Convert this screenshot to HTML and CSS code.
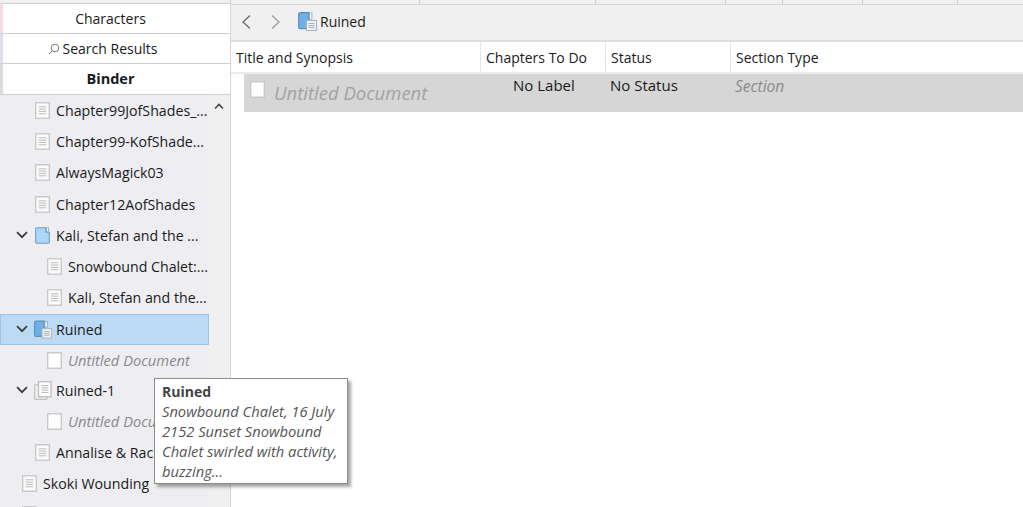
FILE: index.html
```html
<!DOCTYPE html>
<html lang="en">
<head>
<meta charset="utf-8">
<title>Binder</title>
<link rel="stylesheet" href="styles.css">
</head>
<body>
<svg class="defs" width="0" height="0" aria-hidden="true">
  <defs>
    <symbol id="doc" viewBox="0 0 16 18">
      <rect x="0.75" y="0.75" width="14.5" height="16.5" fill="#fbfbfb" stroke="#c9c9c9" stroke-width="1.5"/>
      <path d="M4 5h8M4 7.5h8M4 10h8M4 12.5h8" stroke="#b8b8b8" stroke-width="1"/>
    </symbol>
    <symbol id="blank" viewBox="0 0 16 18">
      <rect x="0.75" y="0.75" width="14.5" height="16.5" fill="#fff" stroke="#c8c8c8" stroke-width="1.5"/>
    </symbol>
    <symbol id="folder" viewBox="0 0 16 18">
      <path d="M2.2.7h9.3v4.8h3.8v10.3a1.5 1.5 0 0 1-1.5 1.5H2.2A1.5 1.5 0 0 1 .7 15.8V2.2A1.5 1.5 0 0 1 2.2.7z" fill="#aed6f7" stroke="#6f9fc6" stroke-width="1.2"/>
      <rect x="12.2" y="0.8" width="2.2" height="4" fill="#fff" stroke="#7f9db5" stroke-width=".8"/>
    </symbol>
    <symbol id="folderdoc" viewBox="0 0 19 19">
      <path d="M2.2.7h8.6v16H2.2A1.5 1.5 0 0 1 .7 15.2V2.2A1.5 1.5 0 0 1 2.2.7z" fill="#70b0e6" stroke="#5a8fbe" stroke-width="1.2"/>
      <rect x="11.5" y="1" width="2.4" height="6" fill="#fff" stroke="#7f9db5" stroke-width=".8"/>
      <rect x="8.5" y="8.5" width="10" height="10" fill="#eef2f5" stroke="#a9b4bd"/>
      <path d="M10.5 11.5h6M10.5 13.5h6M10.5 15.5h6" stroke="#a8b0b8"/>
    </symbol>
    <symbol id="stack" viewBox="0 0 18 19">
      <rect x="0.75" y="3.75" width="12" height="14.5" fill="#f2f2f2" stroke="#c0c0c0" stroke-width="1.2"/>
      <rect x="4.5" y="0.75" width="12.5" height="15" fill="#fff" stroke="#bcbcbc" stroke-width="1.3"/>
      <path d="M7.5 4.5h7M7.5 6.8h7M7.5 9.1h7M7.5 11.4h7" stroke="#b4b4b4"/>
    </symbol>
    <symbol id="chev" viewBox="0 0 12 8">
      <path d="M1 1.2l5 5 5-5" fill="none" stroke="#3c3c3c" stroke-width="1.7"/>
    </symbol>
  </defs>
</svg>
<div class="app">
  <aside class="sidebar">
    <div class="tabs">
      <div class="tab tab-pink">Characters</div>
      <div class="tab tab-blue"><svg class="search" viewBox="0 0 12 12" aria-hidden="true"><circle cx="7" cy="5" r="3.8" fill="none" stroke="#777" stroke-width="1"/><path d="M4.2 7.8L1 11" stroke="#777" stroke-width="1"/></svg>Search Results</div>
      <div class="tab tab-bold">Binder</div>
    </div>
    <div class="tree-wrap">
      <div class="tree">
        <div class="row lvl1"><svg class="ico"><use href="#doc"/></svg><span class="label">Chapter99JofShades_...</span></div>
        <div class="row lvl1"><svg class="ico"><use href="#doc"/></svg><span class="label">Chapter99-KofShade...</span></div>
        <div class="row lvl1"><svg class="ico"><use href="#doc"/></svg><span class="label">AlwaysMagick03</span></div>
        <div class="row lvl1 nudge"><svg class="ico"><use href="#doc"/></svg><span class="label">Chapter12AofShades</span></div>
        <div class="row lvl1"><svg class="chev"><use href="#chev"/></svg><svg class="ico"><use href="#folder"/></svg><span class="label">Kali, Stefan and the ...</span></div>
        <div class="row lvl2"><svg class="ico"><use href="#doc"/></svg><span class="label">Snowbound Chalet:...</span></div>
        <div class="row lvl2"><svg class="ico"><use href="#doc"/></svg><span class="label">Kali, Stefan and the...</span></div>
        <div class="row lvl1 selected nudge"><svg class="chev"><use href="#chev"/></svg><svg class="ico ico-wide"><use href="#folderdoc"/></svg><span class="label">Ruined</span></div>
        <div class="row lvl2"><svg class="ico"><use href="#blank"/></svg><span class="label muted">Untitled Document</span></div>
        <div class="row lvl1 pull"><svg class="chev"><use href="#chev"/></svg><svg class="ico ico-wide"><use href="#stack"/></svg><span class="label">Ruined-1</span></div>
        <div class="row lvl2"><svg class="ico"><use href="#blank"/></svg><span class="label muted">Untitled Document</span></div>
        <div class="row lvl1"><svg class="ico"><use href="#doc"/></svg><span class="label">Annalise &amp; Rachel</span></div>
        <div class="row lvl0"><svg class="ico"><use href="#doc"/></svg><span class="label">Skoki Wounding</span></div>
        <div class="row lvl0"><svg class="ico"><use href="#doc"/></svg></div>
      </div>
      <div class="scrollbar"><svg class="up" viewBox="0 0 10 7" aria-hidden="true"><path d="M1 5.5l4-4 4 4" fill="none" stroke="#444" stroke-width="1.6"/></svg></div>
    </div>
  </aside>
  <main class="content">
    <div class="ruler">
      <span class="tick t1"></span><span class="tick t2"></span><span class="tick t3"></span><span class="tick t4"></span><span class="tick t5"></span><span class="tick t6"></span>
    </div>
    <div class="header-bar">
      <svg class="nav" viewBox="0 0 12 16" aria-hidden="true"><path d="M10 1.5L3 8l7 6.5" fill="none" stroke="#707070" stroke-width="1.4"/></svg>
      <svg class="nav nav-next" viewBox="0 0 12 16" aria-hidden="true"><path d="M2 1.5L9 8l-7 6.5" fill="none" stroke="#a0a0a0" stroke-width="1.4"/></svg>
      <svg class="crumb-ico"><use href="#folderdoc"/></svg>
      <span>Ruined</span>
    </div>
    <div class="cols">
      <div class="col c-title">Title and Synopsis</div>
      <div class="col c-todo">Chapters To Do</div>
      <div class="col c-status">Status</div>
      <div class="col c-type">Section Type</div>
    </div>
    <div class="doc-row">
      <div class="cell c-title2"><svg class="doc-ico"><use href="#blank"/></svg><span class="doc-title">Untitled Document</span></div>
      <div class="cell c-label">No Label</div>
      <div class="cell c-stat">No Status</div>
      <div class="cell c-sec">Section</div>
    </div>
  </main>
</div>
<div class="tooltip">
  <strong>Ruined</strong>
  <em>Snowbound Chalet, 16 July 2152 Sunset Snowbound Chalet swirled with activity, buzzing...</em>
</div>
</body>
</html>
```
FILE: styles.css
```css
* { box-sizing: border-box; }
html, body { margin: 0; height: 100%; overflow: hidden; }
body {
  font-family: "Open Sans", "Noto Sans", sans-serif;
  font-size: 14px;
  color: #1a1a1a;
  background: #fff;
  position: relative;
}
.defs { position: absolute; }
.app { display: flex; height: 507px; }

.sidebar {
  width: 231px;
  flex: none;
  display: flex;
  flex-direction: column;
  border-right: 1px solid #d4d4d4;
  background: #f0f0f0;
}
.tabs { display: flex; flex-direction: column; padding-top: 3px; background: #f0f0f0; }
.tab {
  height: 30px;
  border-top: 1px solid #cfcfcf;
  border-left: 3px solid #e4e4e4;
  background: #fff;
  display: flex;
  align-items: center;
  justify-content: center;
  padding: 0 12px 1px 0;
}
.tab-pink { border-left-color: #f6d9e2; }
.tab-blue { border-left-color: #dcdcf0; padding-right: 28px; }
.tab-bold { font-weight: 700; font-size: 14.5px; border-left-color: #dcdcdc; height: 31px; padding-bottom: 2px; }
.search { width: 12px; height: 12px; margin-right: 3px; margin-top: 1px; }

.tree-wrap { flex: 1; display: flex; min-height: 0; border-top: 1px solid #cfcfcf; }
.tree { width: 209px; flex: none; background: #eeeef2; overflow: hidden; font-size: 14.2px; }
.scrollbar { flex: 1; background: #f0f0f0; display: flex; justify-content: center; align-items: flex-start; padding-top: 8px; }
.up { width: 10px; height: 7px; margin-right: 2px; }

.row {
  height: 31px;
  display: flex;
  align-items: center;
  position: relative;
  white-space: nowrap;
}
.nudge { margin-top: 1px; }
.pull { margin-top: -1px; }
.lvl0 { padding-left: 22px; }
.lvl1 { padding-left: 35px; }
.lvl2 { padding-left: 47px; }
.ico { width: 15px; height: 17px; flex: none; margin-right: 6px; }
.ico-wide { width: 18px; height: 19px; margin-left: -1px; margin-right: 4px; }
.chev { position: absolute; left: 16px; top: 11px; width: 12px; height: 8px; }
.selected { background: #bcdaf5; outline: 1px solid #9cc5ea; outline-offset: -1px; }
.label { overflow: hidden; }
.muted { color: #8a8a8a; font-style: italic; font-size: 14.7px; margin-top: -1px; }

.content { flex: 1; min-width: 0; display: flex; flex-direction: column; }
.ruler { height: 5px; background: #f0f0f0; border-bottom: 1px solid #d6d6d6; position: relative; }
.tick { position: absolute; top: 0; width: 1px; height: 4px; background: #d0d0d0; }
.t1 { left: 188px; }
.t2 { left: 364px; }
.t3 { left: 494px; }
.t4 { left: 551px; }
.t5 { left: 631px; }
.t6 { left: 726px; }

.header-bar {
  height: 37px;
  background: #f0f0f0;
  border-bottom: 2px solid #dedede;
  display: flex;
  align-items: center;
  padding-left: 9px;
  padding-bottom: 2px;
}
.nav { width: 12px; height: 16px; }
.nav-next { margin-left: 18px; }
.crumb-ico { width: 19px; height: 19px; margin-left: 16px; margin-right: 3px; }

.cols { display: flex; height: 32px; border-bottom: 2px solid #ececec; }
.col { display: flex; align-items: center; padding-left: 5px; border-right: 1px solid #e4e4e4; flex: none; }
.c-title { width: 250px; }
.c-todo { width: 125px; }
.c-status { width: 125px; }
.c-type { flex: 1; border-right: 0; }

.doc-row {
  margin-left: 13px;
  height: 38px;
  background: #d6d6d6;
  display: flex;
  position: relative;
  font-size: 15px;
}
.cell { flex: none; padding-top: 1px; }
.c-title2 { width: 269px; display: flex; padding-top: 7px; padding-left: 6px; }
.doc-ico { width: 15px; height: 17px; flex: none; margin-right: 9px; }
.doc-title { font-size: 18.5px; font-style: italic; color: #a2a2a2; margin-top: -1px; }
.c-label { width: 97px; }
.c-stat { width: 125px; }
.c-sec { font-style: italic; color: #8a8a8a; font-size: 15.5px; }

.tooltip {
  position: absolute;
  left: 154px;
  top: 378px;
  width: 194px;
  height: 106px;
  background: #fff;
  border: 1px solid #8c8c8c;
  box-shadow: 3px 3px 3px rgba(0,0,0,.35);
  padding: 3px 3px 0 7px;
  color: #555;
  line-height: 20px;
}
.tooltip strong { display: block; color: #444; }
.tooltip em { display: block; font-size: 14.7px; margin-top: -1px; }
```
